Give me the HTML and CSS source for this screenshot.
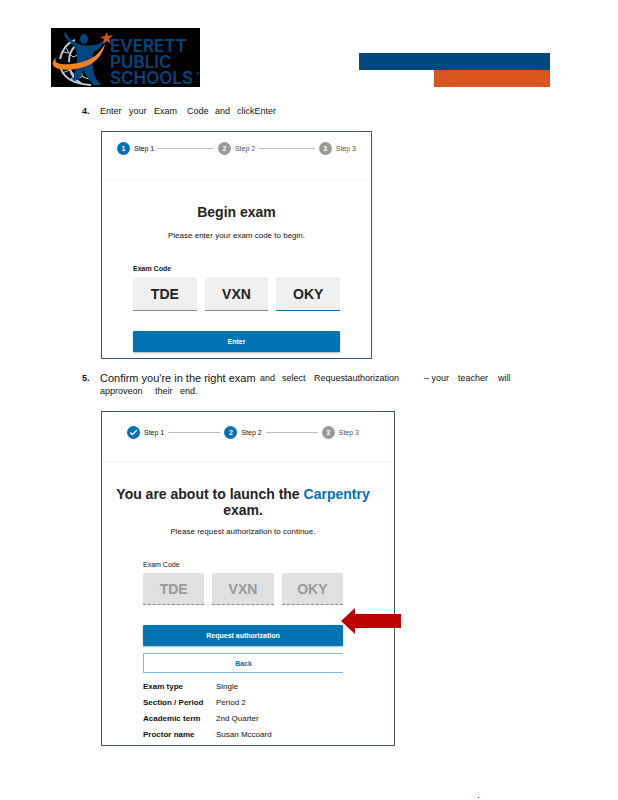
FILE: index.html
```html
<!DOCTYPE html>
<html lang="en">
<head>
    <meta charset="UTF-8">
    <meta name="viewport" content="width=device-width, initial-scale=1.0">
    <title>Everett Public Schools - Exam Instructions</title>
    <link rel="stylesheet" href="styles.css">
</head>
<body>
    <header class="page-header">
        <svg class="logo" viewBox="0 0 149 59" role="img" aria-label="Everett Public Schools">
            <rect width="149" height="59" fill="#000"/>
            <g fill="none" stroke="#b9cbdc" stroke-width="2">
                <path d="M24 12C16 15 11 22 9 31M10 41c3 8 12 15 30 16"/>
                <path d="M25 17c-5 5-7 9-7 17M19 41c1 5 5 11 12 15"/>
                <path d="M12 24l6 1 4 4 5-2M15 20l3 5M11 45l8-3 4 4-3 6 6-1M30 44l2 5 6 2M28 50l4-2" stroke-width="1"/>
            </g>
            <ellipse cx="33" cy="11" rx="4" ry="5" fill="#00467f"/>
            <path d="M14 2c1 6 6 11 14 14 5 2 10 2 14 1 4 0 8-2 12-5-2 5-6 9-11 12-2 3-2 8-1 16 1 7 3 12 8 17h-7c-5-4-8-9-10-15-3 4-4 7-6 10h-5c2-8 4-16 4-24 0-5-2-9-6-13-5-4-8-7-6-12z" fill="#00467f"/>
            <path d="M6 29c-6 4-6 10 2 12 9 2 22 0 32-5 8-5 12-11 14-20-5 8-10 13-17 16-10 4-20 5-27 4-6-1-7-4-4-7z" fill="#f58220"/>
            <path d="M56 4l1 4 5-1-4 4 2 5-4-3-4 3 1-5-4-2 5-1z" fill="#d9541e"/>
            <g class="logo-text">
                <text x="59" y="24">EVERETT</text>
                <text x="59" y="40">PUBLIC</text>
                <text x="59" y="56">SCHOOLS</text>
            </g>
            <circle cx="147" cy="45" r="1" fill="none" stroke="#00467f"/>
        </svg>
        <div class="stripes">
            <div class="stripe-blue"></div>
            <div class="stripe-orange"></div>
        </div>
    </header>

    <main>
        <section class="step">
            <span class="step-number">4.</span>
            <div class="step-body">
                <p class="words words-enter">
                    <span>Enter</span> <span>your</span> <span>Exam</span> <span>Code</span> <span>and</span> <span>clickEnter</span>
                </p>

                <div class="shot shot-begin">
                    <ol class="stepper">
                        <li class="active"><span class="dot">1</span>Step 1</li>
                        <li class="line"></li>
                        <li><span class="dot">2</span>Step 2</li>
                        <li class="line"></li>
                        <li><span class="dot">3</span>Step 3</li>
                    </ol>
                    <form class="exam-form">
                        <h2>Begin exam</h2>
                        <p class="hint">Please enter your exam code to begin.</p>
                        <label class="code-label" for="code1">Exam Code</label>
                        <div class="codes">
                            <input type="text" id="code1" value="TDE">
                            <input type="text" aria-label="Exam code part 2" value="VXN">
                            <input type="text" class="current" aria-label="Exam code part 3" value="OKY">
                        </div>
                        <button type="button" class="btn">Enter</button>
                    </form>
                </div>
            </div>
        </section>

        <section class="step step-confirm">
            <span class="step-number">5.</span>
            <div class="step-body">
                <p class="words words-confirm">
                    <span class="lead">Confirm you're in the right exam</span> <span>and</span> <span>select</span> <span>Requestauthorization</span> <span>&ndash; your</span> <span>teacher</span> <span>will</span>
                </p>
                <p class="words words-approve">
                    <span>approveon</span> <span>their</span> <span>end.</span>
                </p>

                <div class="shot shot-launch">
                    <ol class="stepper">
                        <li class="active">
                            <span class="dot">
                                <svg viewBox="0 0 12 12" aria-hidden="true"><path d="M3 6l2 2 4-4" fill="none" stroke="#fff" stroke-width="1.2"/></svg>
                            </span>Step 1
                        </li>
                        <li class="line"></li>
                        <li class="active"><span class="dot">2</span>Step 2</li>
                        <li class="line"></li>
                        <li><span class="dot">3</span>Step 3</li>
                    </ol>
                    <h2>You are about to launch the <span class="exam-name">Carpentry</span> exam.</h2>
                    <p class="hint">Please request authorization to continue.</p>
                    <form class="exam-form">
                        <label class="code-label" for="code4">Exam Code</label>
                        <div class="codes">
                            <input type="text" id="code4" value="TDE" disabled>
                            <input type="text" aria-label="Exam code part 2" value="VXN" disabled>
                            <input type="text" aria-label="Exam code part 3" value="OKY" disabled>
                        </div>
                        <button type="button" class="btn">Request authorization</button>
                        <button type="button" class="btn btn-back">Back</button>
                        <table class="details">
                            <tr><th scope="row">Exam type</th><td>Single</td></tr>
                            <tr><th scope="row">Section / Period</th><td>Period 2</td></tr>
                            <tr><th scope="row">Academic term</th><td>2nd Quarter</td></tr>
                            <tr><th scope="row">Proctor name</th><td>Susan Mccoard</td></tr>
                        </table>
                    </form>
                    <svg class="arrow" viewBox="0 0 60 26" aria-hidden="true">
                        <path d="M0 13L14 0v6h46v14H14v6z" fill="#c00000"/>
                    </svg>
                </div>
            </div>
        </section>
    </main>

    <footer class="page-footer"><span class="mark"></span></footer>
</body>
</html>
```

FILE: styles.css
```css
* {
    box-sizing: border-box;
}

body {
    margin: 0;
    background: #fff;
    color: #111;
    font-family: "Liberation Sans", Arial, sans-serif;
    font-size: 8px;
}

h2, p, ol {
    margin: 0;
    padding: 0;
}

/* header */
.page-header {
    display: flex;
    justify-content: space-between;
    align-items: flex-end;
    padding: 28px 68px 0 51px;
}

.logo {
    width: 149px;
    height: 59px;
}

.logo-text {
    fill: #00467f;
    font-family: Inter, sans-serif;
    font-size: 17px;
    font-weight: 600;
}

.stripes {
    width: 191px;
}

.stripe-blue {
    height: 17px;
    background: #00467f;
}

.stripe-orange {
    width: 116px;
    height: 17px;
    margin-left: auto;
    background: #d9541e;
}

/* instructions */
main {
    padding: 18px 68px 0 82px;
}

.step {
    display: flex;
}

.step-confirm {
    margin-top: 13px;
}

.step-number {
    flex: 0 0 18px;
    font-size: 9px;
    font-weight: bold;
    line-height: 13px;
}

.step-body {
    flex: 1;
}

.words {
    display: grid;
    font-size: 9px;
    line-height: 13px;
    white-space: nowrap;
}

.words-enter {
    grid-template-columns: 29px 25px 33px 28px 22px auto;
}

.words-confirm {
    grid-template-columns: 160px 22px 32px 110px 34px 40px auto;
}

.words-approve {
    grid-template-columns: 55px 25px auto;
}

.lead {
    font-size: 11px;
}

/* framed screens */
.shot {
    position: relative;
    width: 100%;
    margin-left: 1px;
    border: 1px solid #44546a;
}

.shot-begin {
    max-width: 271px;
    margin-top: 13px;
    padding-bottom: 6px;
}

.shot-launch {
    max-width: 294px;
    margin-top: 13px;
    padding-bottom: 2px;
}

.stepper {
    display: flex;
    align-items: center;
    gap: 4px;
    padding: 10px 15px 24px;
    border-bottom: 1px solid #f4f4f4;
    list-style: none;
    font-size: 7px;
    color: #555;
}

.shot-launch .stepper {
    padding: 14px 35px 22px 25px;
}

.stepper li {
    display: flex;
    align-items: center;
    gap: 4px;
}

.stepper .active {
    color: #111;
}

.stepper .line {
    flex: 1;
    height: 1px;
    background: #bbb;
}

.dot {
    width: 13px;
    height: 13px;
    border-radius: 50%;
    background: #999;
    color: #fff;
    font-weight: bold;
    line-height: 13px;
    text-align: center;
}

.active .dot {
    background: #0073b5;
}

.dot svg {
    display: block;
    width: 13px;
    height: 13px;
}

.shot h2 {
    font-size: 14px;
    line-height: 16px;
    text-align: center;
    color: #222;
}

.shot .exam-name {
    color: #0073b5;
}

.hint {
    margin-top: 10px;
    line-height: 12px;
    text-align: center;
}

.shot-begin .exam-form {
    padding: 24px 31px 0;
}

.shot-launch h2 {
    padding: 24px 20px 0 10px;
}

.shot-launch .hint {
    margin-top: 8px;
    padding-right: 10px;
}

.shot-launch .exam-form {
    padding: 0 51px 0 41px;
}

.code-label {
    display: block;
    margin-top: 21px;
    font-size: 7px;
    line-height: 12px;
}

.shot-begin .code-label {
    font-weight: bold;
}

.codes {
    display: flex;
    gap: 8px;
    margin-top: 2px;
}

.codes input {
    flex: 1;
    min-width: 0;
    width: 0;
    height: 34px;
    padding: 0;
    border: 0;
    border-bottom: 1px solid #888;
    border-radius: 2px 2px 0 0;
    background: #efefef;
    color: #222;
    font-family: inherit;
    font-size: 14px;
    font-weight: bold;
    text-align: center;
}

.codes .current {
    border-bottom-color: #0073b5;
}

.codes input:disabled {
    height: 32px;
    border-bottom: 1px dashed #888;
    background: #e0e0e0;
    color: #999;
}

.btn {
    display: block;
    width: 100%;
    height: 21px;
    margin-top: 20px;
    padding: 0;
    border: 0;
    border-radius: 1px;
    background: #0073b5;
    box-shadow: 0 1px 2px rgba(0, 0, 0, 0.3);
    color: #fff;
    font-family: inherit;
    font-size: 7px;
    font-weight: bold;
}

.btn-back {
    height: 20px;
    margin-top: 7px;
    border: 1px solid #7db7dc;
    border-width: 1px 0 1px 1px;
    border-radius: 0;
    background: #fff;
    box-shadow: none;
    color: #0073b5;
}

.details {
    margin-top: 6px;
    border-collapse: collapse;
    line-height: 16px;
}

.details th,
.details td {
    padding: 0;
    text-align: left;
}

.details th {
    width: 73px;
    white-space: nowrap;
}

/* pointer over the request button */
.arrow {
    position: absolute;
    top: 196px;
    right: -7px;
    width: 60px;
    height: 26px;
}

.page-footer {
    display: flex;
    justify-content: flex-end;
    padding: 51px 139px 0 0;
}

.mark {
    width: 1px;
    height: 1px;
    background: #c00000;
}
```
